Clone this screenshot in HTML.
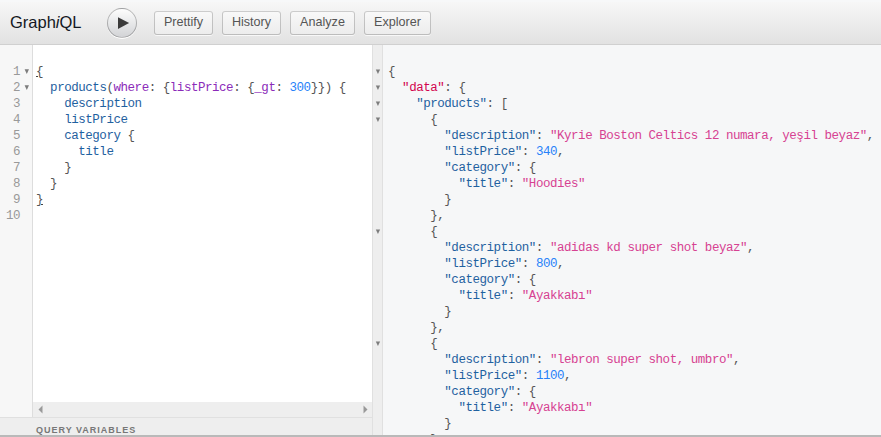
<!DOCTYPE html>
<html><head><meta charset="utf-8">
<style>
*{box-sizing:border-box;margin:0;padding:0}
html,body{width:881px;height:437px;overflow:hidden;background:#fff;position:relative;font-family:"Liberation Sans",sans-serif}
.abs{position:absolute}
#top{left:0;top:2px;width:881px;height:43px;background:linear-gradient(#f7f7f7,#e2e2e2);border-bottom:1px solid #d0d0d0}
#title{left:10px;top:12px;font-size:16.5px;color:#141823;line-height:20px;white-space:nowrap}
#exec{left:107px;top:8px;width:30px;height:30px;border-radius:50%;background:linear-gradient(#fdfdfd,#d2d3d6);border:1px solid rgba(0,0,0,0.25);box-shadow:0 1px 0 #fff}
.btn{top:11px;height:24px;border-radius:3px;background:linear-gradient(#f9f9f9,#ececec);box-shadow:inset 0 0 0 1px rgba(0,0,0,0.2),0 1px 0 rgba(255,255,255,0.7),inset 0 1px #fff;color:#555;font-size:12.6px;line-height:22px;text-align:center;white-space:nowrap}
#qed{left:0;top:45px;width:372px;height:372px;background:#fff}
#qgut{left:0;top:45px;width:33px;height:372px;background:#f7f7f7;border-right:1px solid #ddd}
#hscroll{left:33px;top:402px;width:339px;height:15px;background:#eee}
#vtitle{left:0;top:417px;width:372px;height:18px;background:#eee;border-top:1px solid #e0e0e0}
#vtext{left:36px;top:425px;font-size:9px;font-weight:bold;letter-spacing:1px;color:#777;line-height:11px;white-space:nowrap}
#bottom{left:0;top:435px;width:881px;height:2px;background:#b9b9b9}
#rborder{left:372px;top:45px;width:1px;height:390px;background:#e0e0e0}
#rgut{left:373px;top:45px;width:10px;height:390px;background:#eee;border-right:1px solid #e0e0e0}
#res{left:383px;top:45px;width:498px;height:390px;background:#f6f7f8}
.code{font-family:"Liberation Mono",monospace;font-size:12.5px;letter-spacing:-0.461px;line-height:16px;white-space:pre}
.ln{color:#999;text-align:right;width:20px;left:0}
.fold{color:#999;font-size:9px}
.p{color:#555}.pr{color:#1F61A0}.at{color:#8B2BB9}.nu{color:#2882F9}.st{color:#D64292}.df{color:#D2054E}
</style></head><body>
<div class="abs" style="left:0;top:0;width:881px;height:2px;background:#f7f8f9"></div>
<div id="top" class="abs"></div>
<div id="title" class="abs">Graph<i>i</i>QL</div>
<div id="exec" class="abs"><svg width="28" height="28" style="position:absolute;left:0;top:0"><path d="M10 8.2 L21.1 14.1 L10 20 Z" fill="#3b3b3b"/></svg></div>
<div class="btn abs" style="left:154px;width:59px">Prettify</div>
<div class="btn abs" style="left:222px;width:59px">History</div>
<div class="btn abs" style="left:290px;width:65px">Analyze</div>
<div class="btn abs" style="left:364px;width:67px">Explorer</div>

<div id="qed" class="abs"></div>
<div id="qgut" class="abs"></div>
<div class="abs code ln" style="top:64px">1
2
3
4
5
6
7
8
9
10</div>
<div class="abs code" style="left:36px;top:64px"><span class="p">{</span>
  <span class="pr">products</span><span class="p">(</span><span class="at">where</span><span class="p">: {</span><span class="at">listPrice</span><span class="p">: {</span><span class="at">_gt</span><span class="p">: </span><span class="nu">300</span><span class="p">}}) {</span>
    <span class="pr">description</span>
    <span class="pr">listPrice</span>
    <span class="pr">category</span> <span class="p">{</span>
      <span class="pr">title</span>
    <span class="p">}</span>
  <span class="p">}</span>
<span class="p">}</span>
</div>
<div id="hscroll" class="abs"></div>
<svg class="abs" style="left:38px;top:405px" width="6" height="9"><path d="M4.5 0.5 L0.5 4.5 L4.5 8.5 Z" fill="#999"/></svg>
<svg class="abs" style="left:363px;top:405px" width="6" height="9"><path d="M0.5 0.5 L4.5 4.5 L0.5 8.5 Z" fill="#999"/></svg>
<div id="vtitle" class="abs"></div>
<div id="vtext" class="abs">QUERY VARIABLES</div>

<div id="rborder" class="abs"></div>
<div id="rgut" class="abs"></div>
<div id="res" class="abs"></div>
<div class="abs code" style="left:388px;top:64px"><span class="p">{</span>
  <span class="df">"data"</span><span class="p">: {</span>
    <span class="pr">"products"</span><span class="p">: [</span>
      <span class="p">{</span>
        <span class="pr">"description"</span><span class="p">: </span><span class="st">"Kyrie Boston Celtics 12 numara, yeşil beyaz"</span><span class="p">,</span>
        <span class="pr">"listPrice"</span><span class="p">: </span><span class="nu">340</span><span class="p">,</span>
        <span class="pr">"category"</span><span class="p">: {</span>
          <span class="pr">"title"</span><span class="p">: </span><span class="st">"Hoodies"</span>
        <span class="p">}</span>
      <span class="p">},</span>
      <span class="p">{</span>
        <span class="pr">"description"</span><span class="p">: </span><span class="st">"adidas kd super shot beyaz"</span><span class="p">,</span>
        <span class="pr">"listPrice"</span><span class="p">: </span><span class="nu">800</span><span class="p">,</span>
        <span class="pr">"category"</span><span class="p">: {</span>
          <span class="pr">"title"</span><span class="p">: </span><span class="st">"Ayakkabı"</span>
        <span class="p">}</span>
      <span class="p">},</span>
      <span class="p">{</span>
        <span class="pr">"description"</span><span class="p">: </span><span class="st">"lebron super shot, umbro"</span><span class="p">,</span>
        <span class="pr">"listPrice"</span><span class="p">: </span><span class="nu">1100</span><span class="p">,</span>
        <span class="pr">"category"</span><span class="p">: {</span>
          <span class="pr">"title"</span><span class="p">: </span><span class="st">"Ayakkabı"</span>
        <span class="p">}</span>
      <span class="p">},</span>
</div>
<svg class="abs" style="left:0;top:0" width="881" height="437" fill="#7d7d7d"><path d="M24.6 69.3 L29.0 69.3 L26.80 73.90 Z"/><path d="M24.6 85.3 L29.0 85.3 L26.80 89.90 Z"/><path d="M375.8 69.4 L380.1 69.4 L377.95 74.00 Z"/><path d="M375.8 85.4 L380.1 85.4 L377.95 90.00 Z"/><path d="M375.8 101.4 L380.1 101.4 L377.95 106.00 Z"/><path d="M375.8 117.4 L380.1 117.4 L377.95 122.00 Z"/><path d="M375.8 229.4 L380.1 229.4 L377.95 234.00 Z"/><path d="M375.8 341.4 L380.1 341.4 L377.95 346.00 Z"/></svg>
<div class="abs" style="left:36px;top:76px;width:2px;height:1px;background:#444"></div>
<div class="abs" style="left:41px;top:204px;width:2px;height:1px;background:#444"></div>
<div id="bottom" class="abs"></div>
</body></html>
